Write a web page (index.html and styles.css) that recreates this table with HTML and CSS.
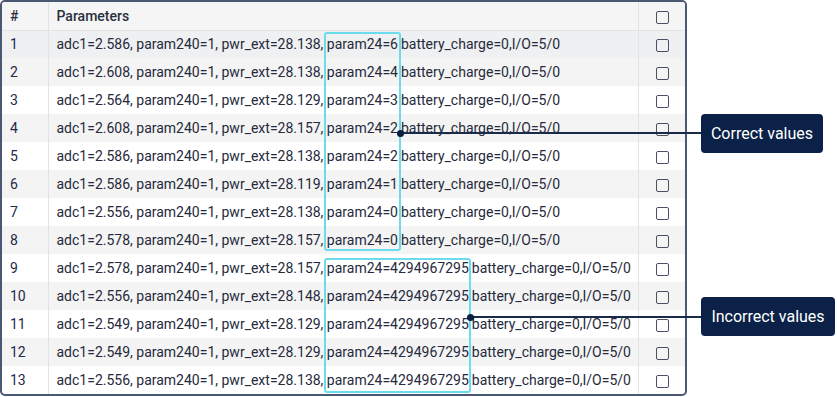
FILE: index.html
```html
<!DOCTYPE html>
<html>
<head>
<meta charset="utf-8">
<link rel="stylesheet" href="styles.css">
</head>
<body>
<div class="stage">
  <div class="frame">
    <table class="grid">
      <colgroup><col class="c-num"><col class="c-par"><col class="c-chk"></colgroup>
      <thead>
        <tr><th>#</th><th>Parameters</th><th class="chk"><span class="box"></span></th></tr>
      </thead>
      <tbody>
        <tr class="hl"><td>1</td><td>adc1=2.586, param240=1, pwr_ext=28.138, <span class="p">param24=6</span>battery_charge=0,I/O=5/0</td><td class="chk"><span class="box"></span></td></tr>
        <tr><td>2</td><td>adc1=2.608, param240=1, pwr_ext=28.138, <span class="p">param24=4</span>battery_charge=0,I/O=5/0</td><td class="chk"><span class="box"></span></td></tr>
        <tr><td>3</td><td>adc1=2.564, param240=1, pwr_ext=28.129, <span class="p">param24=3</span>battery_charge=0,I/O=5/0</td><td class="chk"><span class="box"></span></td></tr>
        <tr><td>4</td><td>adc1=2.608, param240=1, pwr_ext=28.157, <span class="p">param24=2</span>battery_charge=0,I/O=5/0</td><td class="chk"><span class="box"></span></td></tr>
        <tr><td>5</td><td>adc1=2.586, param240=1, pwr_ext=28.138, <span class="p">param24=2</span>battery_charge=0,I/O=5/0</td><td class="chk"><span class="box"></span></td></tr>
        <tr><td>6</td><td>adc1=2.586, param240=1, pwr_ext=28.119, <span class="p">param24=1</span>battery_charge=0,I/O=5/0</td><td class="chk"><span class="box"></span></td></tr>
        <tr><td>7</td><td>adc1=2.556, param240=1, pwr_ext=28.138, <span class="p">param24=0</span>battery_charge=0,I/O=5/0</td><td class="chk"><span class="box"></span></td></tr>
        <tr><td>8</td><td>adc1=2.578, param240=1, pwr_ext=28.157, <span class="p">param24=0</span>battery_charge=0,I/O=5/0</td><td class="chk"><span class="box"></span></td></tr>
        <tr><td>9</td><td>adc1=2.578, param240=1, pwr_ext=28.157, <span class="p">param24=4294967295</span>battery_charge=0,I/O=5/0</td><td class="chk"><span class="box"></span></td></tr>
        <tr><td>10</td><td>adc1=2.556, param240=1, pwr_ext=28.148, <span class="p">param24=4294967295</span>battery_charge=0,I/O=5/0</td><td class="chk"><span class="box"></span></td></tr>
        <tr><td>11</td><td>adc1=2.549, param240=1, pwr_ext=28.129, <span class="p">param24=4294967295</span>battery_charge=0,I/O=5/0</td><td class="chk"><span class="box"></span></td></tr>
        <tr><td>12</td><td>adc1=2.549, param240=1, pwr_ext=28.129, <span class="p">param24=4294967295</span>battery_charge=0,I/O=5/0</td><td class="chk"><span class="box"></span></td></tr>
        <tr><td>13</td><td>adc1=2.556, param240=1, pwr_ext=28.138, <span class="p">param24=4294967295</span>battery_charge=0,I/O=5/0</td><td class="chk"><span class="box"></span></td></tr>
      </tbody>
    </table>
  </div>

  <div class="mark mark-a"></div>
  <div class="mark mark-b"></div>

  <div class="lead lead-a"><span class="dot"></span></div>
  <div class="lead lead-b"><span class="dot"></span></div>

  <div class="label label-a">Correct values</div>
  <div class="label label-b">Incorrect values</div>
</div>
</body>
</html>
```

FILE: styles.css
```css
* { box-sizing: border-box; }
html, body { margin: 0; padding: 0; background: #ffffff; }
body {
  font-family: Roboto, "Liberation Sans", Arial, sans-serif;
  font-size: 14px;
  color: #262a3b;
}
.stage {
  position: relative;
  width: 837px;
  height: 397px;
}
.frame {
  width: 687px;
  height: 396px;
  border: 2px solid #4b5873;
  border-radius: 5px;
  overflow: hidden;
  background: #fff;
}
.grid {
  width: 100%;
  border-collapse: collapse;
  table-layout: fixed;
}
.c-num { width: 46px; }
.c-chk { width: 47px; }
.grid th, .grid td {
  height: 28px;
  padding: 0 0 0 8px;
  text-align: left;
  vertical-align: middle;
  white-space: nowrap;
  border-left: 1px solid #e2e3e6;
  line-height: 16px;
}
.grid th:first-child, .grid td:first-child { border-left: none; }
.grid thead th {
  height: 28px;
  background: #f5f5f6;
  font-weight: 500;
  color: #2a2f3e;
  border-bottom: 1px solid #e2e3e6;
}
.grid tbody tr:nth-child(even) { background: #f4f4f4; }
.grid tbody tr.hl { background: #eff0f2; }
.grid td:first-child { color: #1f2a4a; }
.p { margin-right: 3px; }
.grid .chk { padding: 0; text-align: center; }
.box {
  display: inline-block;
  width: 13px;
  height: 13px;
  border: 1.2px solid #4a5063;
  border-radius: 2px;
  vertical-align: middle;
  margin-left: 1px;
}
.mark {
  position: absolute;
  border: 2px solid #6cdcec;
  border-radius: 3px;
}
.mark-a { left: 324px; top: 32px; width: 77px; height: 219px; }
.mark-b { left: 324px; top: 258px; width: 147px; height: 135px; }
.lead {
  position: absolute;
  height: 2px;
  background: #1a2a4a;
}
.lead-a { left: 400px; top: 132px; width: 301px; }
.lead-b { left: 470px; top: 316px; width: 231px; }
.dot {
  position: absolute;
  left: -3px;
  top: -2.5px;
  width: 7px;
  height: 7px;
  border-radius: 50%;
  background: #0d1e40;
}
.label {
  position: absolute;
  left: 701px;
  height: 39px;
  background: #0b2148;
  color: #ffffff;
  border-radius: 4px;
  font-size: 16px;
  display: flex;
  align-items: center;
  justify-content: center;
}
.label-a { top: 114px; width: 122px; }
.label-b { top: 297px; width: 134px; }
```
